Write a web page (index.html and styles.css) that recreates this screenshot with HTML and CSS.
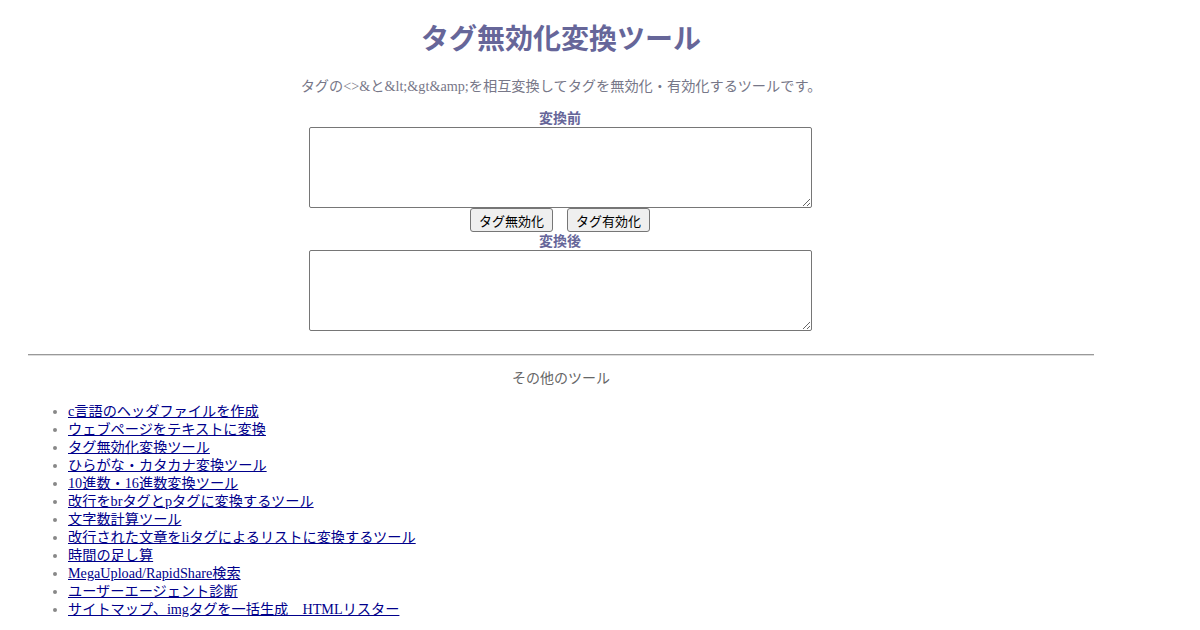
FILE: index.html
```html
<!DOCTYPE html>
<html lang="ja">
<head>
    <meta charset="UTF-8">
    <title>タグ無効化変換ツール</title>
    <link rel="stylesheet" href="styles.css">
</head>
<body>
    <div class="wrap">
        <h1>タグ無効化変換ツール</h1>
        <p class="desc">タグの&lt;&gt;&amp;と&amp;lt;&amp;gt&amp;amp;を相互変換してタグを無効化・有効化するツールです。</p>

        <div class="form">
            <div class="label">変換前</div>
            <textarea id="src"></textarea>
            <div class="buttons">
                <button onclick="escapeTag()">タグ無効化</button>
                <button onclick="unescapeTag()">タグ有効化</button>
            </div>
            <div class="label">変換後</div>
            <textarea id="dst"></textarea>
        </div>

        <hr>
        <p class="other">その他のツール</p>
        <ul class="tools">
            <li><a href="#">c言語のヘッダファイルを作成</a></li>
            <li><a href="#">ウェブページをテキストに変換</a></li>
            <li><a href="#">タグ無効化変換ツール</a></li>
            <li><a href="#">ひらがな・カタカナ変換ツール</a></li>
            <li><a href="#">10進数・16進数変換ツール</a></li>
            <li><a href="#">改行をbrタグとpタグに変換するツール</a></li>
            <li><a href="#">文字数計算ツール</a></li>
            <li><a href="#">改行された文章をliタグによるリストに変換するツール</a></li>
            <li><a href="#">時間の足し算</a></li>
            <li><a href="#">MegaUpload/RapidShare検索</a></li>
            <li><a href="#">ユーザーエージェント診断</a></li>
            <li><a href="#">サイトマップ、imgタグを一括生成　HTMLリスター</a></li>
        </ul>
    </div>

    <script>
        function escapeTag() {
            var s = document.getElementById('src').value;
            document.getElementById('dst').value = s.replace(/&/g, '&amp;').replace(/</g, '&lt;').replace(/>/g, '&gt;');
        }
        function unescapeTag() {
            var s = document.getElementById('src').value;
            document.getElementById('dst').value = s.replace(/&lt;/g, '<').replace(/&gt;/g, '>').replace(/&amp;/g, '&');
        }
    </script>
</body>
</html>
```

FILE: styles.css
```css
body {
    margin: 0;
    font-family: 'Liberation Serif', 'Noto Sans CJK JP', serif;
    font-size: 15px;
    color: #666;
    background: #fff;
}
.wrap {
    width: 1066px;
    margin-left: 28px;
}
h1 {
    margin: 21px 0 0;
    text-align: center;
    font-family: 'Liberation Sans', 'Noto Sans CJK JP', sans-serif;
    font-size: 28px;
    line-height: 38px;
    color: #669;
}
.desc {
    margin: 18px 0 0;
    text-align: center;
    font-size: 14.2px;
    line-height: 18px;
    color: #778;
}
.form {
    display: flex;
    flex-direction: column;
    align-items: center;
    margin-top: 14px;
    padding-right: 2px;
}
.label {
    font-family: 'Liberation Sans', 'Noto Sans CJK JP', sans-serif;
    font-weight: bold;
    font-size: 14px;
    line-height: 18px;
    color: #669;
}
textarea {
    box-sizing: border-box;
    width: 503px;
    height: 81px;
    margin: 0;
    border: 1px solid #767676;
    border-radius: 2px;
}
.buttons {
    display: flex;
    gap: 14px;
}
button {
    font-family: 'Liberation Sans', 'Noto Sans CJK JP', sans-serif;
    font-size: 13px;
    height: 24px;
    padding: 0 6px;
    width: 83px;
    background: #efefef;
    border: 1px solid #767676;
    border-radius: 3px;
    color: #000;
}
hr {
    margin: 23px 0 0;
    border: none;
    border-top: 1px solid #999;
    border-bottom: 1px solid #ddd;
}
.other {
    margin: 13px 0 0;
    text-align: center;
    font-family: 'Liberation Sans', 'Noto Sans CJK JP', sans-serif;
    font-size: 14px;
    line-height: 18px;
    color: #666;
}
.tools {
    margin: 15px 0 0;
    padding-left: 40px;
    line-height: 18px;
    font-size: 14.2px;
}
.tools li {
    color: #888;
}
.tools a {
    color: #00008b;
}
```
